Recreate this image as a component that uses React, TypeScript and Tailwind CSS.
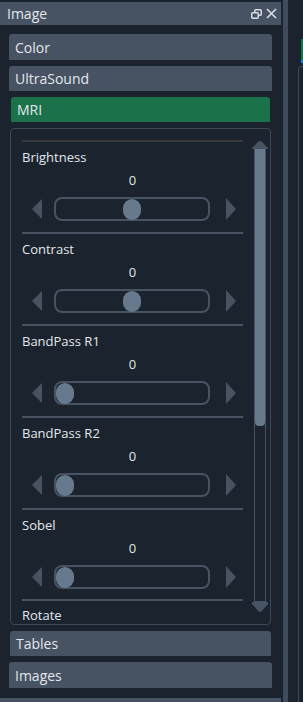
import { FC } from "react";

type Ctrl = { name: string; centered: boolean };

const controls: Ctrl[] = [
  { name: "Brightness", centered: true },
  { name: "Contrast", centered: true },
  { name: "BandPass R1", centered: false },
  { name: "BandPass R2", centered: false },
  { name: "Sobel", centered: false },
];

const SliderRow: FC<{ centered: boolean }> = ({ centered }) => (
  <div className="flex items-center h-[24px] pl-[10px]">
    <svg width="10" height="20" viewBox="0 0 10 20" className="shrink-0">
      <polygon points="10,0 10,20 0,10" fill="#475263" />
    </svg>
    <div
      className={
        "ml-[12px] w-[156px] h-[24px] border-2 border-[#475263] rounded-[8px] flex items-center " +
        (centered ? "justify-center" : "justify-start")
      }
    >
      <div className="w-[18px] h-[21px] rounded-full bg-[#677a8d]" />
    </div>
    <svg width="10" height="22" viewBox="0 0 10 22" className="ml-[16px] shrink-0">
      <polygon points="0,0 10,11 0,22" fill="#475263" />
    </svg>
  </div>
);

const Section: FC<{ ctrl: Ctrl; first: boolean; last: boolean }> = ({ ctrl, first, last }) => (
  <div className="flex flex-col">
    <div className={"h-[2px] " + (first ? "bg-[#383739]" : "bg-[#475263]")} />
    <div className="mt-[6px] text-[13px] leading-[18px] text-[#e2e7ec]">{ctrl.name}</div>
    <div className="mt-[5px] text-[13px] leading-[18px] text-[#e2e7ec] text-center">0</div>
    <div className="mt-[8px]">
      <SliderRow centered={ctrl.centered} />
    </div>
    <div className={last ? "h-[10px]" : "h-[11px]"} />
  </div>
);

const Tab: FC<{ label: string; active?: boolean; tall?: boolean }> = ({ label, active, tall }) => (
  <div
    className={
      "flex items-center px-[6px] text-[14px] text-[#e2e7ec] rounded-t-[3px] " +
      (tall ? "h-[26px] " : "h-[25px] ") +
      (active ? "bg-[#1b714a] mx-[2px]" : "bg-[#475263]")
    }
  >
    {label}
  </div>
);

const App: FC = () => {
  return (
    <div className="w-[303px] h-[702px] bg-[#1b242e] flex overflow-hidden font-['Open_Sans',sans-serif]">
      {/* dock */}
      <div className="w-[281px] flex flex-col">
        <div className="mt-[2px] h-[23px] bg-[#475263] flex items-center justify-between pl-[7px] pr-[4px]">
          <span className="text-[14px] text-[#e2e7ec]">Image</span>
          <div className="flex items-center gap-[4px]">
            <svg width="11" height="10" viewBox="0 0 11 10">
              <rect x="3.75" y="0.75" width="6.5" height="5.5" rx="1" fill="none" stroke="#d8dde2" strokeWidth="1.5" />
              <rect x="0.75" y="3.75" width="6.5" height="5.5" rx="1" fill="#475263" stroke="#d8dde2" strokeWidth="1.5" />
            </svg>
            <svg width="11" height="11" viewBox="0 0 11 11">
              <path d="M1 1 L10 10 M10 1 L1 10" stroke="#d8dde2" strokeWidth="1.6" />
            </svg>
          </div>
        </div>

        <div className="flex flex-col px-[9px] pt-[9px]">
          <Tab label="Color" tall />
          <div className="h-[6px]" />
          <Tab label="UltraSound" />
          <div className="h-[6px]" />
          <Tab label="MRI" active />

          <div className="mt-[6px] mx-[1px] h-[497px] border border-[#3d4757] rounded-[4px] flex overflow-hidden">
            <div className="w-[232px] pl-[11px] pt-[11px]">
              <div className="w-[221px] flex flex-col">
                {controls.map((c, i) => (
                  <Section key={c.name} ctrl={c} first={i === 0} last={i === controls.length - 1} />
                ))}
                <div className="h-[2px] bg-[#475263]" />
                <div className="mt-[6px] text-[13px] leading-[16px] text-[#e2e7ec]">Rotate</div>
              </div>
            </div>
            {/* scrollbar */}
            <div className="ml-[9px] mt-[12px] w-[16px] h-[471px] flex flex-col items-center">
              <svg width="16" height="8" viewBox="0 0 16 8" className="shrink-0">
                <polygon points="7,0 9,0 16,7 16,8 0,8 0,7" fill="#475263" />
              </svg>
              <div className="w-[12px] flex-1 border border-[#475263] border-t-0">
                <div className="h-[277px] bg-[#677a8d] rounded-b-[4px]" />
              </div>
              <svg width="16" height="10" viewBox="0 0 16 10" className="shrink-0">
                <polygon points="0,0 16,0 16,2 9,10 7,10 0,2" fill="#475263" />
              </svg>
            </div>
          </div>

          <div className="h-[6px]" />
          <div className="mx-[1px]">
            <Tab label="Tables" />
          </div>
          <div className="h-[6px]" />
          <Tab label="Images" tall />
        </div>
        <div className="flex-1" />
        <div className="h-[4px] bg-[#475263]" />
      </div>

      {/* splitter and neighbouring area */}
      <div className="w-[2px]" />
      <div className="w-[5px] bg-[#3f4a5a]" />
      <div className="w-[9px]" />
      <div className="w-[6px] flex flex-col">
        <div className="h-[39px]" />
        <div className="h-[21px] ml-[4px] bg-[#1b714a]" />
        <div className="h-[3px] ml-[4px] bg-[#2a7fd4]" />
        <div className="mt-[3px] flex-1 ml-[1px] border-l border-t border-[#3d4757] rounded-tl-[4px]" />
      </div>
    </div>
  );
};

export default App;
